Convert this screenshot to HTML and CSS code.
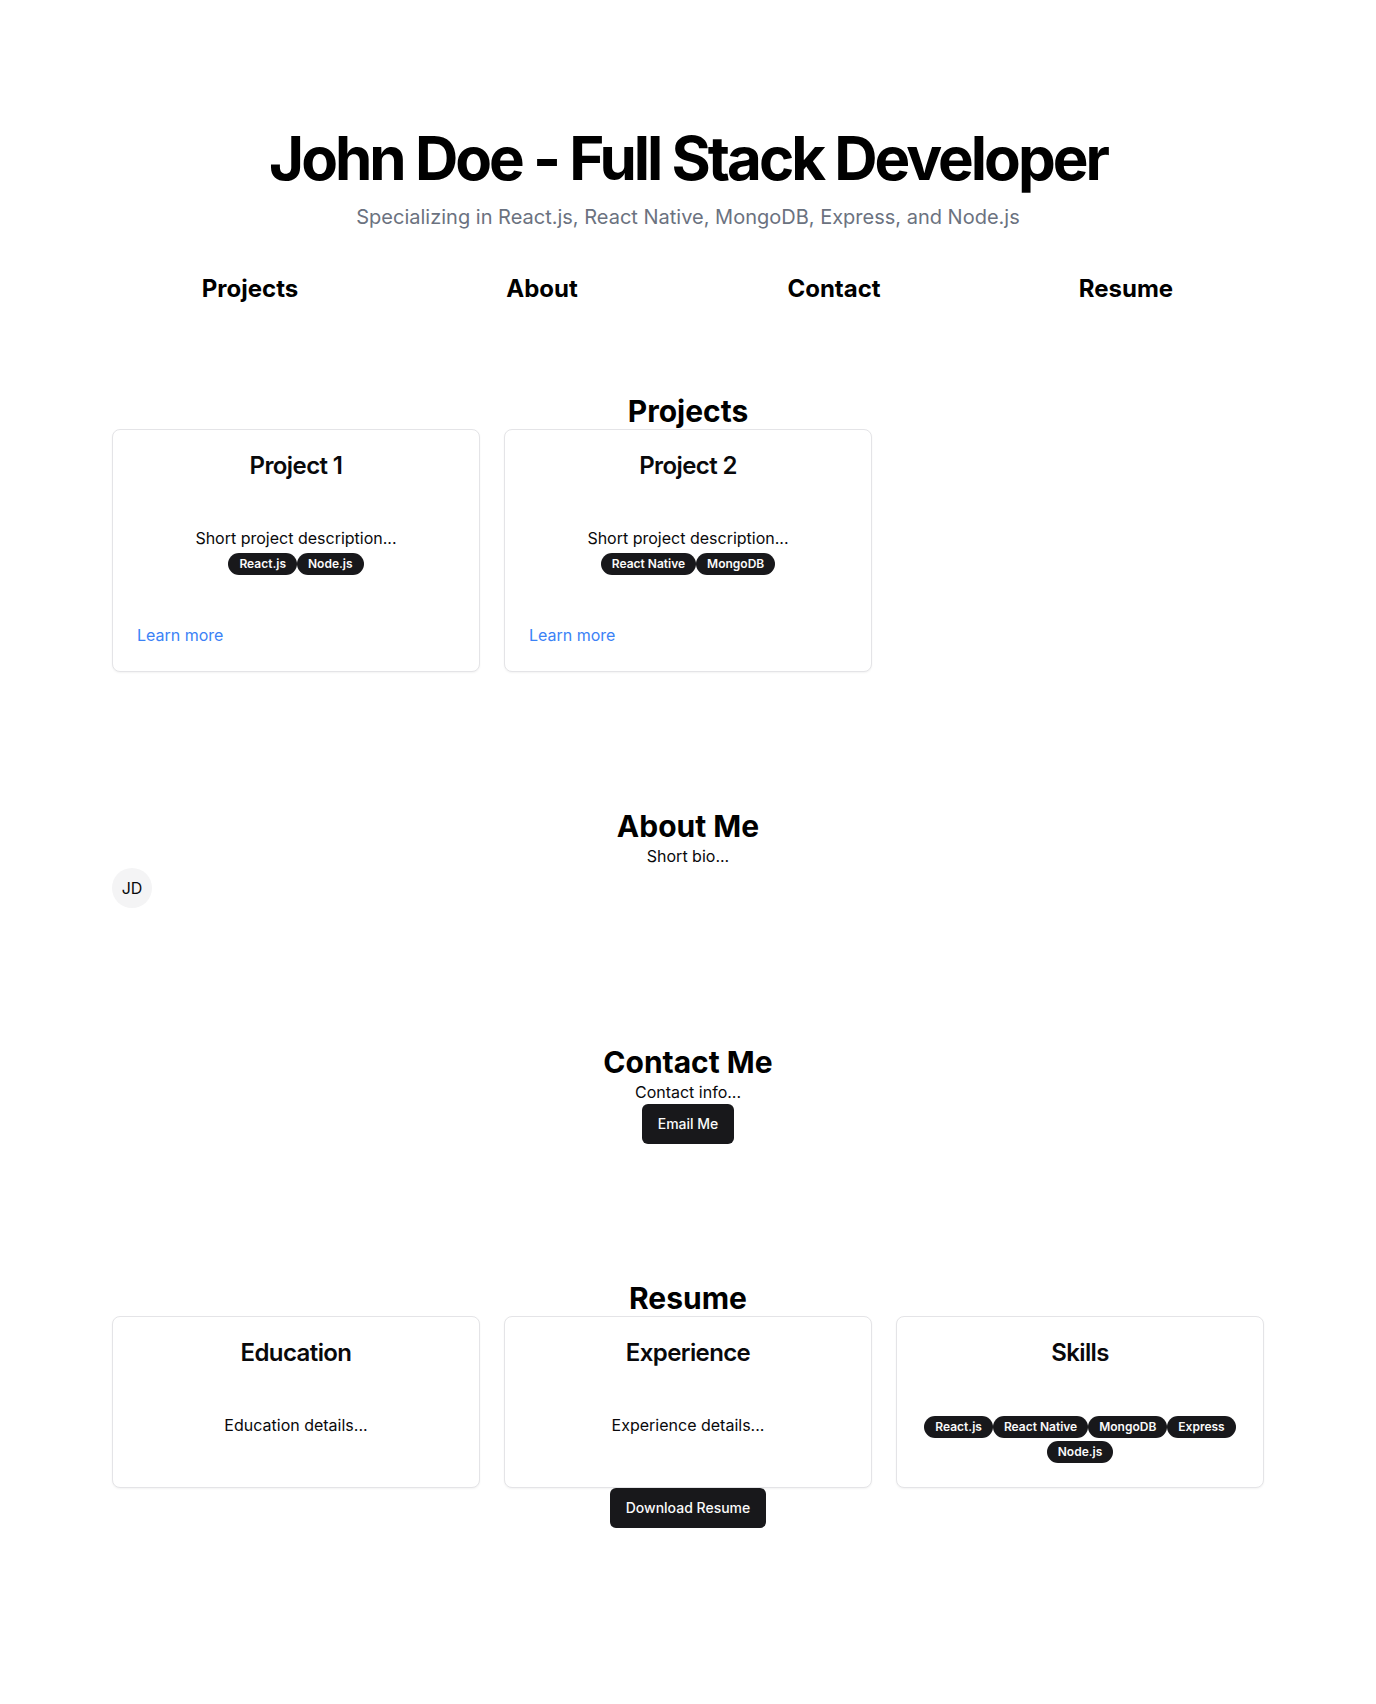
FILE: index.html
```html
<!DOCTYPE html>
<html lang="en">
<head>
<meta charset="utf-8">
<title>John Doe - Full Stack Developer</title>
<link rel="stylesheet" href="styles.css">
</head>
<body>
<div class="page">
  <header class="hero">
    <h1 class="hero-title">John Doe - Full Stack Developer</h1>
    <p class="hero-sub">Specializing in React.js, React Native, MongoDB, Express, and Node.js</p>
    <nav class="nav">
      <a class="nav-link" href="#projects">Projects</a>
      <a class="nav-link" href="#about">About</a>
      <a class="nav-link" href="#contact">Contact</a>
      <a class="nav-link" href="#resume">Resume</a>
    </nav>
  </header>

  <main>
    <section class="section section-first" id="projects">
      <h2 class="section-title">Projects</h2>
      <div class="grid3">
        <div class="card">
          <h3 class="card-title">Project 1</h3>
          <div class="card-body">
            <p class="card-text">Short project description...</p>
            <div class="badges"><span class="badge">React.js</span><span class="badge">Node.js</span></div>
          </div>
          <div class="card-footer"><a class="link" href="#">Learn more</a></div>
        </div>
        <div class="card">
          <h3 class="card-title">Project 2</h3>
          <div class="card-body">
            <p class="card-text">Short project description...</p>
            <div class="badges"><span class="badge">React Native</span><span class="badge">MongoDB</span></div>
          </div>
          <div class="card-footer"><a class="link" href="#">Learn more</a></div>
        </div>
      </div>
    </section>

    <section class="section" id="about">
      <h2 class="section-title">About Me</h2>
      <p class="section-text">Short bio...</p>
      <div class="avatar"><span>JD</span></div>
    </section>

    <section class="section" id="contact">
      <h2 class="section-title">Contact Me</h2>
      <p class="section-text">Contact info...</p>
      <div class="center"><a class="btn" href="#">Email Me</a></div>
    </section>

    <section class="section" id="resume">
      <h2 class="section-title">Resume</h2>
      <div class="grid3">
        <div class="card">
          <h3 class="card-title">Education</h3>
          <div class="card-body">
            <p class="card-text">Education details...</p>
          </div>
        </div>
        <div class="card">
          <h3 class="card-title">Experience</h3>
          <div class="card-body">
            <p class="card-text">Experience details...</p>
          </div>
        </div>
        <div class="card">
          <h3 class="card-title">Skills</h3>
          <div class="card-body">
            <div class="badges"><span class="badge">React.js</span><span class="badge">React Native</span><span class="badge">MongoDB</span><span class="badge">Express</span><span class="badge">Node.js</span></div>
          </div>
        </div>
      </div>
      <div class="center"><a class="btn" href="#">Download Resume</a></div>
    </section>
  </main>
</div>
</body>
</html>
```

FILE: styles.css
```css
* {
  box-sizing: border-box;
}

html, body {
  margin: 0;
  padding: 0;
  background: #ffffff;
}

body {
  font-family: Inter, "Noto Sans", "Liberation Sans", sans-serif;
  color: #09090b;
  font-size: 16px;
  line-height: 24px;
}

.page {
  max-width: 1152px;
  margin: 0 auto;
  padding-bottom: 177px;
}

.hero {
  padding-top: 128px;
  text-align: center;
}

.hero-title {
  margin: 0;
  font-size: 60px;
  line-height: 60px;
  font-weight: 700;
  letter-spacing: -0.05em;
  color: #000000;
}

.hero-sub {
  margin: 15px 0 0;
  font-size: 20px;
  line-height: 28px;
  color: #6b7280;
}

.nav {
  margin-top: 42px;
  display: grid;
  grid-template-columns: repeat(4, 1fr);
  gap: 16px;
}

.nav-link {
  text-align: center;
  font-size: 24px;
  line-height: 32px;
  font-weight: 700;
  color: #000000;
  text-decoration: none;
}

.section {
  margin-top: 136px;
}

.section-first {
  margin-top: 88px;
}

.section-title {
  margin: 0;
  text-align: center;
  font-size: 30px;
  line-height: 36px;
  font-weight: 700;
  color: #000000;
}

.section-text {
  margin: 0;
  text-align: center;
}

.grid3 {
  display: grid;
  grid-template-columns: repeat(3, 1fr);
  gap: 24px;
}

.card {
  border: 1px solid #e4e4e7;
  border-radius: 8px;
  background: #ffffff;
  box-shadow: 0 1px 2px rgba(0, 0, 0, 0.05);
  padding: 24px;
  text-align: center;
}

.card-title {
  margin: 0;
  font-size: 24px;
  line-height: 24px;
  font-weight: 600;
  letter-spacing: -0.025em;
}

.card-body {
  margin-top: 48px;
}

.card-text {
  margin: 0;
}

.badges {
  line-height: 24px;
}

.badge {
  display: inline-flex;
  align-items: center;
  border: 1px solid transparent;
  border-radius: 9999px;
  background: #18181b;
  color: #fafafa;
  font-size: 12px;
  line-height: 16px;
  font-weight: 600;
  padding: 2px 10px;
}

.card-footer {
  margin-top: 48px;
  text-align: left;
}

.link {
  color: #3b82f6;
  text-decoration: none;
}

.avatar {
  width: 40px;
  height: 40px;
  border-radius: 50%;
  background: #f4f4f5;
  display: flex;
  align-items: center;
  justify-content: center;
  font-size: 16px;
}

.center {
  text-align: center;
}

.btn {
  display: inline-flex;
  align-items: center;
  justify-content: center;
  height: 40px;
  padding: 0 16px;
  border-radius: 6px;
  background: #18181b;
  color: #fafafa;
  font-size: 14px;
  line-height: 20px;
  font-weight: 500;
  text-decoration: none;
  vertical-align: top;
}
```
